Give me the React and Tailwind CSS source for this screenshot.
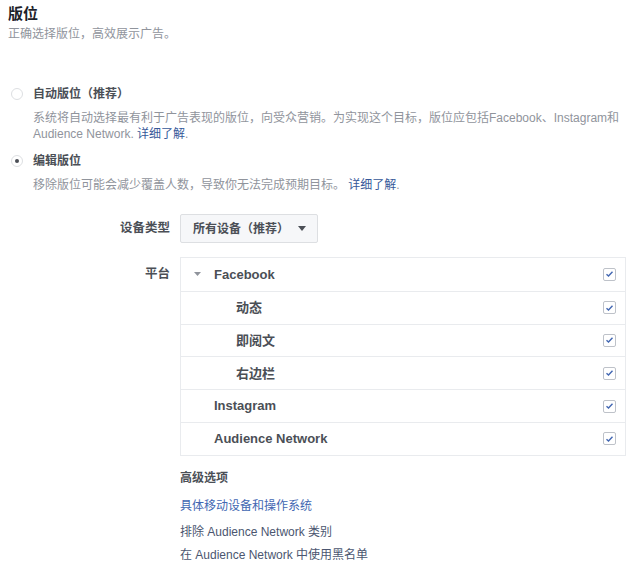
import React from 'react';

const font = { fontFamily: '"Liberation Sans", "Noto Sans CJK SC", sans-serif' };

const Check = () => (
  <span className="w-[13px] h-[13px] border border-[#bec2c9] rounded-[2px] bg-white flex items-center justify-center">
    <svg width="9" height="8" viewBox="0 0 9 8">
      <path d="M1.5 4.2 L3.5 6 L7.5 1.8" fill="none" stroke="#4267b2" strokeWidth="1.4" />
    </svg>
  </span>
);

const rows = [
  { label: 'Facebook', level: 0, caret: true },
  { label: '动态', level: 1 },
  { label: '即阅文', level: 1 },
  { label: '右边栏', level: 1 },
  { label: 'Instagram', level: 0 },
  { label: 'Audience Network', level: 0 },
];

export default function App() {
  return (
    <div className="w-[640px] h-[578px] bg-white text-[12px] text-[#4b4f56] overflow-hidden" style={font}>
      <div className="pl-[8px] pt-[4px]">
        <div className="text-[15px] font-bold text-[#1d2129] leading-[20px]">版位</div>
        <div className="text-[12px] text-[#90949c] leading-[16px] mt-[2px]">正确选择版位，高效展示广告。</div>
      </div>

      <div className="pl-[11px] mt-[44px]">
        <div className="flex items-center gap-[10px] h-[16px]">
          <span className="w-[12px] h-[12px] rounded-full border border-[#dddfe2] bg-white" />
          <span className="font-bold text-[#4b4f56]">自动版位（推荐）</span>
        </div>
        <div className="pl-[22px] mt-[8px] text-[#90949c] leading-[16px] text-[12px]">
          系统将自动选择最有利于广告表现的版位，向受众营销。为实现这个目标，版位应包括Facebook、Instagram和
          <br />
          Audience Network. <span className="text-[#365899]">详细了解</span>.
        </div>

        <div className="flex items-center gap-[10px] h-[16px] mt-[11px]">
          <span className="w-[12px] h-[12px] rounded-full border border-[#dddfe2] bg-white flex items-center justify-center">
            <span className="w-[4px] h-[4px] rounded-full bg-[#4b4f56]" />
          </span>
          <span className="font-bold text-[#4b4f56]">编辑版位</span>
        </div>
        <div className="pl-[22px] mt-[8px] text-[#90949c] leading-[16px] text-[12px]">
          移除版位可能会减少覆盖人数，导致你无法完成预期目标。 <span className="text-[#365899]">详细了解</span>.
        </div>
      </div>

      <div className="mt-[21px] flex items-center">
        <div className="w-[170px] text-right font-bold text-[#4b4f56] text-[12.5px]">设备类型</div>
        <div className="ml-[10px] h-[29px] pl-[12px] pr-[11px] flex items-center gap-[9px] border border-[#dddfe2] rounded-[2px] bg-[#f6f7f9] font-bold">
          <span>所有设备（推荐）</span>
          <svg width="8" height="5" viewBox="0 0 8 5"><path d="M0 0 H8 L4 5 Z" fill="#4b4f56" /></svg>
        </div>
      </div>

      <div className="mt-[14px] flex items-start">
        <div className="w-[170px] text-right font-bold text-[#4b4f56] text-[12.5px] pt-[8px]">平台</div>
        <div className="ml-[10px] w-[446px] border border-[#e9ebee]">
          {rows.map((r, i) => (
            <div
              key={r.label}
              className={`h-[32.8px] flex items-center pr-[9px] ${i > 0 ? 'border-t border-[#e9ebee]' : ''}`}
            >
              <div className="w-[33px] flex justify-center">
                {r.caret && (
                  <svg width="7" height="4" viewBox="0 0 7 4"><path d="M0 0 H7 L3.5 4 Z" fill="#90949c" /></svg>
                )}
              </div>
              <div className={`flex-1 font-bold text-[13px] ${r.level === 1 ? 'pl-[22px]' : ''}`}>{r.label}</div>
              <Check />
            </div>
          ))}
        </div>
      </div>

      <div className="pl-[180px] mt-[14px]">
        <div className="font-bold text-[#4b4f56] leading-[16px]">高级选项</div>
        <div className="mt-[12px] text-[#4267b2] leading-[16px]">具体移动设备和操作系统</div>
        <div className="mt-[10px] text-[#4b5670] leading-[16px]">排除 Audience Network 类别</div>
        <div className="mt-[7px] text-[#4b5670] leading-[16px]">在 Audience Network 中使用黑名单</div>
      </div>
    </div>
  );
}
